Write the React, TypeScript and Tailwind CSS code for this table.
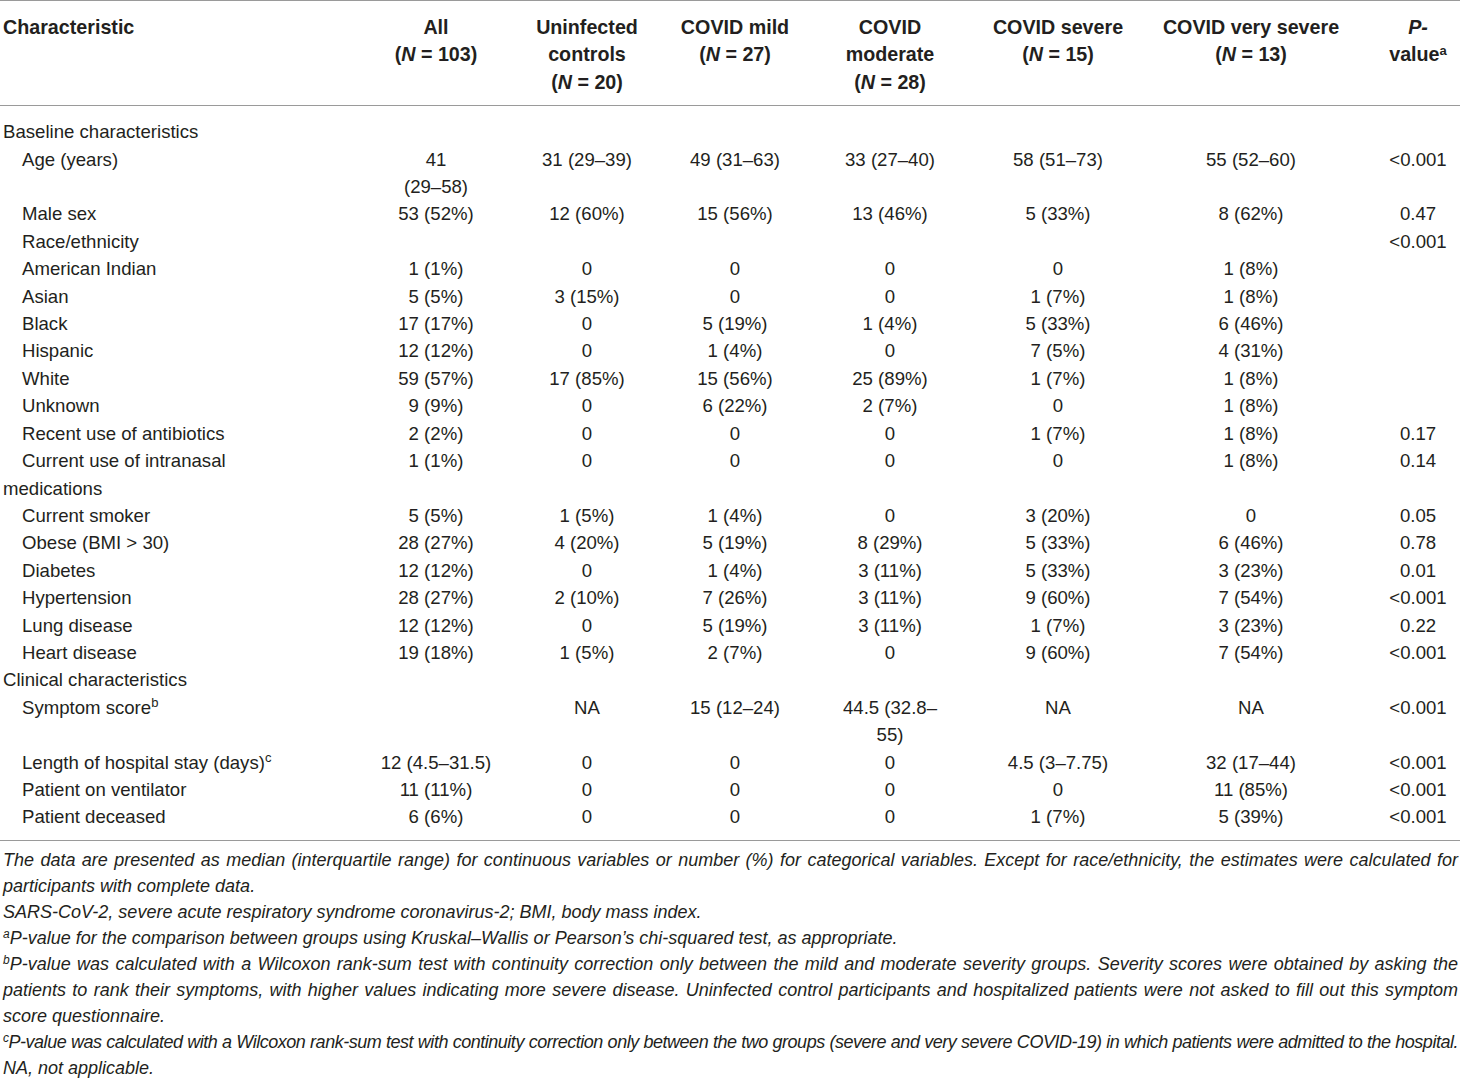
import React from "react";

type Cell = string | string[];
type Row = {
  label: React.ReactNode;
  label2?: string;
  indent?: boolean;
  vals?: Cell[];
  p?: string;
};

const grid =
  "grid grid-cols-[360px_152px_150px_146px_164px_172px_214px_102px]";

const rows: Row[] = [
  { label: "Baseline characteristics" },
  {
    label: "Age (years)",
    indent: true,
    vals: [["41", "(29–58)"], "31 (29–39)", "49 (31–63)", "33 (27–40)", "58 (51–73)", "55 (52–60)"],
    p: "<0.001",
  },
  {
    label: "Male sex",
    indent: true,
    vals: ["53 (52%)", "12 (60%)", "15 (56%)", "13 (46%)", "5 (33%)", "8 (62%)"],
    p: "0.47",
  },
  { label: "Race/ethnicity", indent: true, vals: ["", "", "", "", "", ""], p: "<0.001" },
  { label: "American Indian", indent: true, vals: ["1 (1%)", "0", "0", "0", "0", "1 (8%)"] },
  { label: "Asian", indent: true, vals: ["5 (5%)", "3 (15%)", "0", "0", "1 (7%)", "1 (8%)"] },
  { label: "Black", indent: true, vals: ["17 (17%)", "0", "5 (19%)", "1 (4%)", "5 (33%)", "6 (46%)"] },
  { label: "Hispanic", indent: true, vals: ["12 (12%)", "0", "1 (4%)", "0", "7 (5%)", "4 (31%)"] },
  { label: "White", indent: true, vals: ["59 (57%)", "17 (85%)", "15 (56%)", "25 (89%)", "1 (7%)", "1 (8%)"] },
  { label: "Unknown", indent: true, vals: ["9 (9%)", "0", "6 (22%)", "2 (7%)", "0", "1 (8%)"] },
  {
    label: "Recent use of antibiotics",
    indent: true,
    vals: ["2 (2%)", "0", "0", "0", "1 (7%)", "1 (8%)"],
    p: "0.17",
  },
  {
    label: "Current use of intranasal",
    label2: "medications",
    indent: true,
    vals: ["1 (1%)", "0", "0", "0", "0", "1 (8%)"],
    p: "0.14",
  },
  {
    label: "Current smoker",
    indent: true,
    vals: ["5 (5%)", "1 (5%)", "1 (4%)", "0", "3 (20%)", "0"],
    p: "0.05",
  },
  {
    label: "Obese (BMI > 30)",
    indent: true,
    vals: ["28 (27%)", "4 (20%)", "5 (19%)", "8 (29%)", "5 (33%)", "6 (46%)"],
    p: "0.78",
  },
  {
    label: "Diabetes",
    indent: true,
    vals: ["12 (12%)", "0", "1 (4%)", "3 (11%)", "5 (33%)", "3 (23%)"],
    p: "0.01",
  },
  {
    label: "Hypertension",
    indent: true,
    vals: ["28 (27%)", "2 (10%)", "7 (26%)", "3 (11%)", "9 (60%)", "7 (54%)"],
    p: "<0.001",
  },
  {
    label: "Lung disease",
    indent: true,
    vals: ["12 (12%)", "0", "5 (19%)", "3 (11%)", "1 (7%)", "3 (23%)"],
    p: "0.22",
  },
  {
    label: "Heart disease",
    indent: true,
    vals: ["19 (18%)", "1 (5%)", "2 (7%)", "0", "9 (60%)", "7 (54%)"],
    p: "<0.001",
  },
  { label: "Clinical characteristics" },
  {
    label: (
      <>
        Symptom score<sup className="text-[13px]">b</sup>
      </>
    ),
    indent: true,
    vals: ["", "NA", "15 (12–24)", ["44.5 (32.8–", "55)"], "NA", "NA"],
    p: "<0.001",
  },
  {
    label: (
      <>
        Length of hospital stay (days)<sup className="text-[13px]">c</sup>
      </>
    ),
    indent: true,
    vals: ["12 (4.5–31.5)", "0", "0", "0", "4.5 (3–7.75)", "32 (17–44)"],
    p: "<0.001",
  },
  {
    label: "Patient on ventilator",
    indent: true,
    vals: ["11 (11%)", "0", "0", "0", "0", "11 (85%)"],
    p: "<0.001",
  },
  {
    label: "Patient deceased",
    indent: true,
    vals: ["6 (6%)", "0", "0", "0", "1 (7%)", "5 (39%)"],
    p: "<0.001",
  },
];

function ValCell({ v, extra }: { v?: Cell; extra?: string }) {
  const lines = v === undefined ? [] : Array.isArray(v) ? v : [v];
  return (
    <div className={`flex flex-col items-center ${extra ?? ""}`}>
      {lines.map((l, i) => (
        <div key={i} className="whitespace-nowrap">
          {l === "" ? "\u00a0" : l}
        </div>
      ))}
    </div>
  );
}

const N = ({ n }: { n: string }) => (
  <div className="whitespace-nowrap">
    (<span className="italic">N</span> = {n})
  </div>
);

function HeadCell({ lines, n }: { lines: string[]; n: string }) {
  return (
    <div className="flex flex-col items-center">
      {lines.map((l, i) => (
        <div key={i} className="whitespace-nowrap">
          {l}
        </div>
      ))}
      <N n={n} />
    </div>
  );
}

function FootLine({
  children,
  justify,
  extra,
}: {
  children: React.ReactNode;
  justify?: boolean;
  extra?: string;
}) {
  return (
    <div
      className={`whitespace-nowrap ${justify ? "text-justify [text-align-last:justify]" : ""} ${extra ?? ""}`}
    >
      {children}
    </div>
  );
}

export default function App() {
  return (
    <div
      className="w-[1460px] h-[1079px] bg-white text-[#231f20] overflow-hidden"
      style={{ fontFamily: '"Liberation Sans", Arial, Helvetica, sans-serif' }}
    >
      {/* Header */}
      <div
        className={`${grid} border-t border-[#9a9a9a] pt-[13px] pb-[9px] text-[19.7px] font-bold leading-[27.4px]`}
      >
        <div className="pl-[3px] whitespace-nowrap">Characteristic</div>
        <HeadCell lines={["All"]} n="103" />
        <HeadCell lines={["Uninfected", "controls"]} n="20" />
        <HeadCell lines={["COVID mild"]} n="27" />
        <HeadCell lines={["COVID", "moderate"]} n="28" />
        <HeadCell lines={["COVID severe"]} n="15" />
        <HeadCell lines={["COVID very severe"]} n="13" />
        <div className="flex flex-col items-center pl-[18px]">
          <div className="italic">P-</div>
          <div className="whitespace-nowrap">
            value<sup className="text-[13px]">a</sup>
          </div>
        </div>
      </div>

      {/* Body */}
      <div className="border-t border-[#9a9a9a] pt-[12px] pb-[9.6px] text-[18.6px] leading-[27.4px] font-normal">
        {rows.map((r, i) => (
          <div key={i} className={grid}>
            <div className="whitespace-nowrap">
              <div className={r.indent ? "pl-[22px]" : "pl-[3px]"}>{r.label}</div>
              {r.label2 && <div className="pl-[3px]">{r.label2}</div>}
            </div>
            {(r.vals ?? ["", "", "", "", "", ""]).map((v, j) => (
              <ValCell key={j} v={v} />
            ))}
            <ValCell v={r.p ?? ""} extra="pl-[18px]" />
          </div>
        ))}
      </div>

      {/* Footnotes */}
      <div className="border-t border-[#9a9a9a] pt-[6px] pl-[3px] pr-[2px] text-[18px] italic leading-[26px]">
        <FootLine justify>
          The data are presented as median (interquartile range) for continuous variables or number (%) for
          categorical variables. Except for race/ethnicity, the estimates were calculated for
        </FootLine>
        <FootLine>participants with complete data.</FootLine>
        <FootLine>SARS-CoV-2, severe acute respiratory syndrome coronavirus-2; BMI, body mass index.</FootLine>
        <FootLine>
          <sup className="text-[12px]">a</sup>P-value for the comparison between groups using Kruskal–Wallis or
          Pearson’s chi-squared test, as appropriate.
        </FootLine>
        <FootLine justify>
          <sup className="text-[12px]">b</sup>P-value was calculated with a Wilcoxon rank-sum test with continuity
          correction only between the mild and moderate severity groups. Severity scores were obtained by asking the
        </FootLine>
        <FootLine justify>
          patients to rank their symptoms, with higher values indicating more severe disease. Uninfected control
          participants and hospitalized patients were not asked to fill out this symptom
        </FootLine>
        <FootLine>score questionnaire.</FootLine>
        <FootLine justify extra="tracking-[-0.48px]">
          <sup className="text-[12px]">c</sup>P-value was calculated with a Wilcoxon rank-sum test with continuity
          correction only between the two groups (severe and very severe COVID-19) in which patients were admitted
          to the hospital.
        </FootLine>
        <FootLine>NA, not applicable.</FootLine>
      </div>
    </div>
  );
}
